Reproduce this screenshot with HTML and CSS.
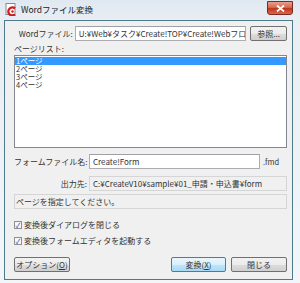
FILE: index.html
```html
<!DOCTYPE html>
<html>
<head>
    <title>Wordファイル変換</title>
    <link rel="stylesheet" href="styles.css">
</head>
<body>
    <div class="window">
        <div class="titlebar">
            <svg class="app-icon" width="13" height="13" viewBox="0 0 13 13">
                <rect x="1" y="0.5" width="9" height="11" fill="#fff" stroke="#8a8a8a"/>
                <path d="M10 5.5 A4 4 0 1 0 10 11.5" fill="none" stroke="#d21a1a" stroke-width="2.4"/>
                <circle cx="7.5" cy="8.5" r="1.2" fill="#d21a1a"/>
            </svg>
            <span class="title">Wordファイル変換</span>
            <div class="close-btn">
                <svg width="9" height="7" viewBox="0 0 9 7">
                    <path d="M1 0.5 L8 6.5 M8 0.5 L1 6.5" stroke="#fff" stroke-width="1.8"/>
                </svg>
            </div>
        </div>

        <div class="client">
            <div class="row row-word">
                <span class="label label-word">Wordファイル:</span>
                <div class="field field-word">U:¥Web¥タスク¥Create!TOP¥Create!Webフロー</div>
                <div class="btn btn-browse">参照...</div>
            </div>

            <div class="list-label">ページリスト:</div>
            <div class="listbox">
                <div class="item selected">1ページ</div>
                <div class="item">2ページ</div>
                <div class="item">3ページ</div>
                <div class="item">4ページ</div>
            </div>

            <div class="row row-form">
                <span class="label label-form">フォームファイル名:</span>
                <div class="field field-form">Create!Form</div>
                <span class="ext">.fmd</span>
            </div>

            <div class="row row-out">
                <span class="label label-out">出力先:</span>
                <div class="field readonly field-out">C:¥CreateV10¥sample¥01_申請・申込書¥form</div>
            </div>

            <div class="field readonly status">ページを指定してください。</div>

            <label class="check check-first"><span class="box">✓</span>変換後ダイアログを閉じる</label>
            <label class="check"><span class="box">✓</span>変換後フォームエディタを起動する</label>

            <div class="buttons">
                <div class="btn btn-option">オプション(<u>O</u>)</div>
                <div class="spacer"></div>
                <div class="btn btn-default">変換(<u>X</u>)</div>
                <div class="btn btn-close">閉じる</div>
            </div>
        </div>
    </div>
</body>
</html>
```

FILE: styles.css
```css
body {
    margin: 0;
    background: #fff;
    font-family: "Noto Sans CJK JP", "Noto Sans", sans-serif;
    font-size: 8px;
    color: #333;
}
.window {
    width: 300px;
    height: 283px;
    box-sizing: border-box;
    padding: 0 7px 3px 4px;
    background: linear-gradient(180deg, #dfe8f1 0, #e9eef3 20px, #f3f6f9 100%);
    display: flex;
    flex-direction: column;
}
.titlebar {
    height: 20px;
    display: flex;
    align-items: flex-start;
    padding-top: 3px;
    box-sizing: border-box;
}
.app-icon { margin: 0 3px 0 1px; }
.title {
    font-size: 8.5px;
    line-height: 13px;
    color: #222;
}
.close-btn {
    margin-left: auto;
    margin-top: -2px;
    width: 26px;
    height: 14px;
    border: 1px solid #7a2a20;
    border-radius: 0 0 3px 3px;
    box-sizing: border-box;
    background: linear-gradient(180deg, #e8a08e 0, #d46a52 45%, #c2351c 55%, #d86a4c 100%);
    display: flex;
    align-items: center;
    justify-content: center;
}
.client {
    flex: 1;
    background: #f0f0f0;
    border: 1px solid #4d7a8c;
    padding: 4px 5px 0 9px;
    display: flex;
    flex-direction: column;
}
.row {
    display: flex;
    align-items: center;
    height: 16px;
}
.label { white-space: nowrap; }
.label-word { width: 59px; text-align: right; padding-right: 2px; }
.label-form { width: 73px; padding-right: 2px; }
.label-out { width: 73px; text-align: right; padding-right: 2px; }
.field {
    height: 15px;
    box-sizing: border-box;
    border: 1px solid #abadb3;
    border-top-color: #9ea0a6;
    background: #fff;
    line-height: 13px;
    padding-left: 3px;
    white-space: nowrap;
    overflow: hidden;
}
.field-word { width: 172px; }
.field-form { width: 171px; }
.field-out { flex: 1; }
.readonly {
    background: #f0f0f0;
    border-color: #d5d5d5;
}
.ext { margin-left: 3px; font-size: 7.5px; }
.btn {
    height: 15px;
    box-sizing: border-box;
    border: 1px solid #707070;
    border-radius: 2px;
    background: linear-gradient(180deg, #f2f2f2 0, #ebebeb 50%, #dddddd 51%, #cfcfcf 100%);
    text-align: center;
    line-height: 13px;
    white-space: nowrap;
}
.btn-browse { width: 37px; margin-left: 4px; }
.list-label { margin-top: 3px; line-height: 9px; }
.listbox {
    margin-top: 2px;
    height: 93px;
    box-sizing: border-box;
    border: 1px solid #828790;
    background: #fff;
    padding: 1px 0 0 0;
}
.item {
    height: 8px;
    line-height: 8px;
    font-size: 7.5px;
    padding-left: 1px;
}
.item.selected { background: #3399ff; color: #fff; }
.row-form { margin-top: 5px; }
.row-out { margin-top: 7px; height: 15px; }
.status { margin-top: 3px; padding-left: 1px; }
.check {
    display: flex;
    align-items: center;
    height: 9px;
    margin-top: 7px;
}
.check-first { margin-top: 11px; }
.box {
    width: 8px;
    height: 8px;
    box-sizing: border-box;
    border: 1px solid #8f8f8f;
    background: #f8f8f8;
    color: #2a4a9a;
    font-size: 7px;
    line-height: 6px;
    text-align: center;
    margin-right: 2px;
}
.buttons {
    display: flex;
    margin-top: 12px;
}
.spacer { flex: 1; }
.btn-option { width: 56px; }
.btn-default {
    width: 55px;
    border-color: #3c7fb1;
    background: linear-gradient(180deg, #eaf6fd 0, #d9f0fc 50%, #bee6fd 51%, #a7d9f5 100%);
}
.btn-close { width: 56px; margin-left: 5px; }
```
